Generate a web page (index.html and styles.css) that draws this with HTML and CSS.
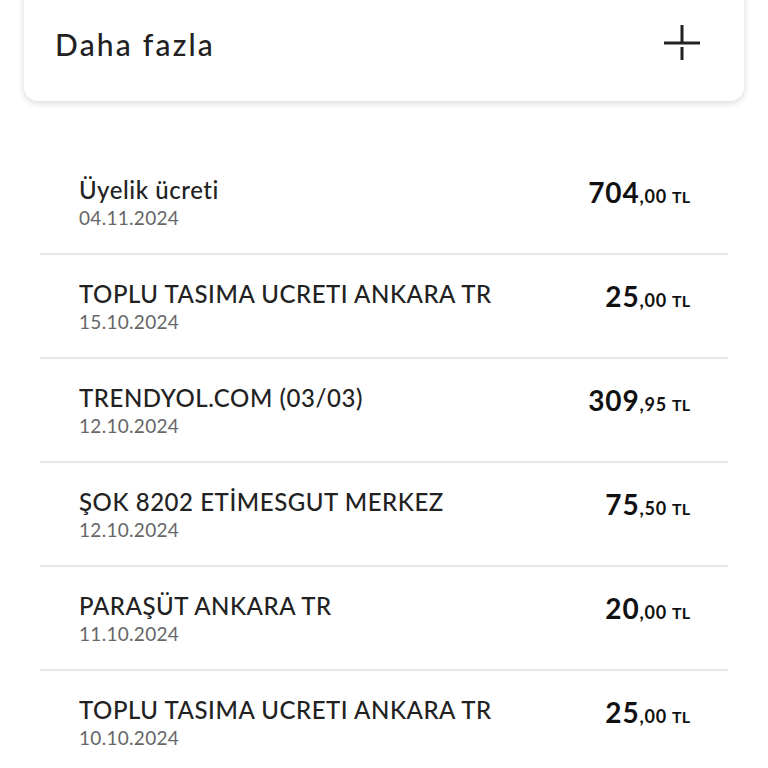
FILE: index.html
```html
<!DOCTYPE html>
<html lang="tr">
<head>
<meta charset="utf-8">
<title>Hareketler</title>
<link rel="stylesheet" href="styles.css">
</head>
<body>
<div class="card">
  <span class="card-title">Daha fazla</span>
  <svg class="plus" width="40" height="40" viewBox="0 0 40 40" aria-hidden="true">
    <rect x="17.5" y="1" width="3" height="18" fill="#222"/>
    <rect x="1" y="17.5" width="36" height="3" fill="#222"/>
    <rect x="17.5" y="23" width="3" height="13" fill="#222"/>
  </svg>
</div>
<ul class="list">
  <li class="row">
    <div class="info"><div class="name">Üyelik ücreti</div><div class="date">04.11.2024</div></div>
    <div class="amount"><span class="int">704</span><span class="dec">,00</span><span class="cur">TL</span></div>
  </li>
  <li class="row">
    <div class="info"><div class="name">TOPLU TASIMA UCRETI ANKARA TR</div><div class="date">15.10.2024</div></div>
    <div class="amount"><span class="int">25</span><span class="dec">,00</span><span class="cur">TL</span></div>
  </li>
  <li class="row">
    <div class="info"><div class="name">TRENDYOL.COM (03/03)</div><div class="date">12.10.2024</div></div>
    <div class="amount"><span class="int">309</span><span class="dec">,95</span><span class="cur">TL</span></div>
  </li>
  <li class="row">
    <div class="info"><div class="name">ŞOK 8202 ETİMESGUT MERKEZ</div><div class="date">12.10.2024</div></div>
    <div class="amount"><span class="int">75</span><span class="dec">,50</span><span class="cur">TL</span></div>
  </li>
  <li class="row">
    <div class="info"><div class="name">PARAŞÜT ANKARA TR</div><div class="date">11.10.2024</div></div>
    <div class="amount"><span class="int">20</span><span class="dec">,00</span><span class="cur">TL</span></div>
  </li>
  <li class="row">
    <div class="info"><div class="name">TOPLU TASIMA UCRETI ANKARA TR</div><div class="date">10.10.2024</div></div>
    <div class="amount"><span class="int">25</span><span class="dec">,00</span><span class="cur">TL</span></div>
  </li>
</ul>
</body>
</html>
```
FILE: styles.css
```css
html, body {
  margin: 0;
  padding: 0;
  background: #ffffff;
}
body {
  font-family: Lato, "Noto Sans", sans-serif;
  color: #222222;
  overflow: hidden;
}
.card {
  margin: -20px 24px 0 24px;
  height: 121px;
  padding: 6px 41px 0 31px;
  box-sizing: border-box;
  display: flex;
  align-items: center;
  justify-content: space-between;
  background: #fff;
  border-radius: 14px;
  box-shadow: 0 2px 7px rgba(0, 0, 0, 0.16);
}
.card-title {
  font-size: 30px;
  font-weight: 500;
  color: #222;
  letter-spacing: 2.2px;
}
.plus {
  display: block;
  margin-top: 0;
}
.list {
  list-style: none;
  margin: 50px 40px 0 40px;
  padding: 0;
}
.row {
  height: 104px;
  box-sizing: border-box;
  border-bottom: 2px solid #e8e8e8;
  display: flex;
  justify-content: space-between;
  align-items: flex-start;
  padding: 25px 38px 0 39px;
}
.name {
  font-size: 24px;
  line-height: 28px;
  font-weight: 500;
  color: #222;
  letter-spacing: 0.56px;
}
.date {
  font-size: 19px;
  line-height: 22px;
  color: #666;
  margin-top: 3px;
  letter-spacing: 0.3px;
}
.amount {
  display: flex;
  align-items: baseline;
  line-height: 28px;
  margin-top: 2px;
  margin-right: 0;
  color: #111;
}
.int {
  font-size: 28px;
  font-weight: 700;
  letter-spacing: 0.9px;
}
.dec {
  font-size: 18px;
  font-weight: 700;
  letter-spacing: 0.8px;
}
.cur {
  font-size: 16px;
  font-weight: 700;
  margin-left: 5px;
}
```
